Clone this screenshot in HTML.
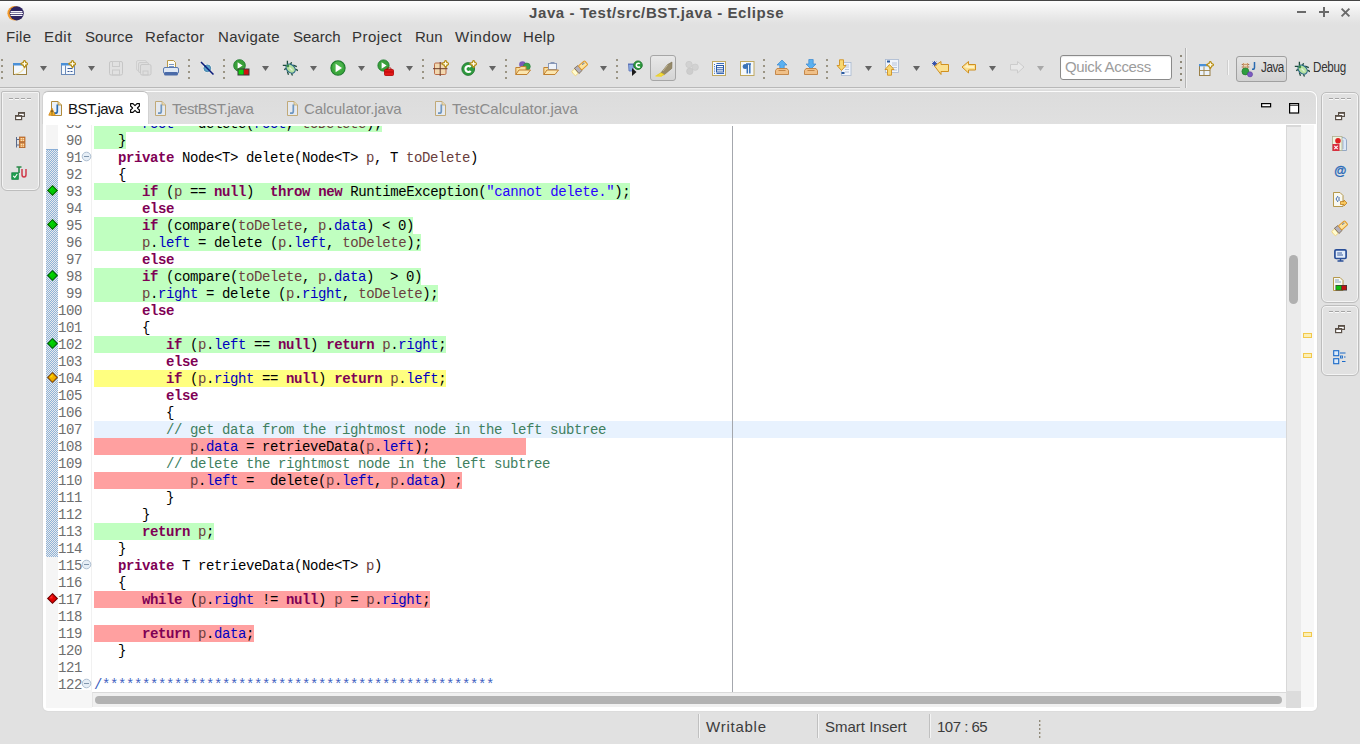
<!DOCTYPE html>
<html><head><meta charset="utf-8">
<style>
*{box-sizing:border-box;margin:0;padding:0}
html,body{width:1360px;height:744px;overflow:hidden;background:#e1e1e1;font-family:"Liberation Sans",sans-serif;position:relative}
.abs{position:absolute}
#title{left:0;top:0;width:1360px;height:26px;background:linear-gradient(#454545 0,#454545 1px,#fefefe 1px,#f6f6f6 6px,#ececec 14px,#e3e3e3 22px,#e1e1e1 26px)}
#title .t{left:529px;top:4px;white-space:nowrap;font-weight:bold;font-size:15px;color:#4e4e4e;letter-spacing:0.6px}
#menu{left:0;top:25px;width:1360px;height:24px}
#menu span{position:absolute;top:3px;font-size:15px;color:#333}
#tbsep{left:0;top:87px;width:1180px;height:1px;background:#b8b8b8}
#tbsep2{left:0;top:88px;width:1180px;height:1px;background:#ececec}
.dd{position:absolute;width:0;height:0;border-left:4px solid transparent;border-right:4px solid transparent;border-top:5px solid #6a6a6a;top:66px}
.vsep{position:absolute;top:58px;height:22px;width:1px;border-left:1px dotted #9a9a9a}
#editor{left:43px;top:91px;width:1274px;height:620px;background:#fff;border-radius:7px 7px 5px 5px;box-shadow:0 0 0 1px #dcdcdc}
#tabrow{left:0;top:0;width:1274px;height:33px;background:#dcdcdc}
.tab{position:absolute;font-size:15px;color:#8c8c8c;line-height:17px}
#code{left:44px;top:124px;width:1273px;height:584px;overflow:hidden}
.ln{position:absolute;left:13px;width:25px;text-align:right;font-family:"Liberation Mono",monospace;font-size:14px;letter-spacing:-0.4px;line-height:17px;height:17px;color:#6e6e6e}
.cl{position:absolute;height:17px;white-space:pre;font-family:"Liberation Mono",monospace;font-size:14px;letter-spacing:-0.4px;line-height:17px;color:#000}
.hl{position:absolute;height:17px}
.g{background:#c0ffc0}.r{background:#ffa0a0}.y{background:#ffff80}
.k{color:#7f0055;font-weight:bold}.f{color:#0000c0}.p{color:#6a3e3e}.s{color:#2a00ff}.c{color:#3f7f5f}.jd{color:#3f5fbf}
#status{left:0;top:712px;width:1360px;height:32px}
#status span{position:absolute;top:6px;font-size:15px;color:#3c3c3c}
.trim{position:absolute;background:#e1e1e1;border:1px solid #bdbdbd;border-radius:4px;box-shadow:inset 0 0 0 1px #f4f4f4}
</style></head>
<body>
<div id="title" class="abs">
  <svg class="abs" style="left:7px;top:4px" width="18" height="18" viewBox="0 0 18 18">
    <circle cx="7.7" cy="9.3" r="7.3" fill="#f39a2a"/>
    <circle cx="9.7" cy="9.3" r="7.1" fill="#2e2460"/>
    <rect x="3.5" y="6.9" width="12" height="1.3" rx="0.6" fill="#f4f2fa"/>
    <rect x="3" y="8.8" width="13" height="1.3" rx="0.6" fill="#fff"/>
    <rect x="3.5" y="10.7" width="12" height="1.3" rx="0.6" fill="#f4f2fa"/>
  </svg>
  <div class="abs t">Java - Test/src/BST.java - Eclipse</div>
  <div class="abs" style="left:1297px;top:11px;width:9px;height:2px;background:#6a6a6a"></div>
  <div class="abs" style="left:1319px;top:11px;width:10px;height:2px;background:#6a6a6a"></div>
  <div class="abs" style="left:1323px;top:7px;width:2px;height:10px;background:#6a6a6a"></div>
  <svg class="abs" style="left:1340px;top:7px" width="11" height="11" viewBox="0 0 11 11"><path d="M1.6 1.6L9.4 9.4M9.4 1.6L1.6 9.4" stroke="#6a6a6a" stroke-width="1.9"/></svg>
</div>
<div id="menu" class="abs">
  <span style="left:6px;letter-spacing:0.3px">File</span><span style="left:44px;letter-spacing:0.5px">Edit</span><span style="left:85px;letter-spacing:0.1px">Source</span><span style="left:145px;letter-spacing:0.35px">Refactor</span><span style="left:218px;letter-spacing:0.35px">Navigate</span><span style="left:293px">Search</span><span style="left:352px;letter-spacing:0.5px">Project</span><span style="left:415px">Run</span><span style="left:455px;letter-spacing:0.55px">Window</span><span style="left:523px;letter-spacing:0.3px">Help</span>
</div>
<div id="toolbar" class="abs" style="left:0;top:0;width:1360px;height:90px">
<div class="abs" style="left:1px;top:58px;width:2px;height:22px;background:repeating-linear-gradient(180deg,transparent 0 1px,#9a9484 1px 3px,transparent 3px 6px)"></div>
<svg class="abs" style="left:12px;top:60px" width="16" height="16" viewBox="0 0 16 16"><rect x="1.5" y="3.5" width="13" height="11" fill="#f4f8fc" stroke="#9a8040"/><rect x="1" y="3" width="14" height="2.5" fill="#4a90d8"/><path d="M3 14Q10 13 13 7" stroke="#f0e0a8" stroke-width="1.2" fill="none"/><path d="M12.5 0.19999999999999973Q13.4 2.9 16.1 3.8Q13.4 4.7 12.5 7.4Q11.6 4.7 8.9 3.8Q11.6 2.9 12.5 0.19999999999999973Z" fill="#f8e8a8" stroke="#b8901c" stroke-width="1.5" stroke-linejoin="round"/><path d="M12.5 1.5999999999999996V6.0M10.3 3.8H14.7" stroke="#fffef0" stroke-width="1"/></svg>
<svg class="abs" style="left:40px;top:65px" width="7" height="7" viewBox="0 0 7 7"><path d="M0 1H7L3.5 6Z" fill="#646464"/></svg>
<svg class="abs" style="left:60px;top:60px" width="16" height="16" viewBox="0 0 16 16"><rect x="1.5" y="3.5" width="13" height="11" fill="#f4f8fc" stroke="#6a8ab8"/><rect x="1" y="3" width="14" height="2.5" fill="#4a90d8"/><path d="M5.5 5.5V14.5" stroke="#6a8ab8"/><path d="M7.5 8.5H12.5M7.5 11.5H9.5M10.5 11.5H12.5" stroke="#3a5a98" stroke-width="1"/><path d="M12.5 0.19999999999999973Q13.4 2.9 16.1 3.8Q13.4 4.7 12.5 7.4Q11.6 4.7 8.9 3.8Q11.6 2.9 12.5 0.19999999999999973Z" fill="#f8e8a8" stroke="#b8901c" stroke-width="1.5" stroke-linejoin="round"/><path d="M12.5 1.5999999999999996V6.0M10.3 3.8H14.7" stroke="#fffef0" stroke-width="1"/></svg>
<svg class="abs" style="left:88px;top:65px" width="7" height="7" viewBox="0 0 7 7"><path d="M0 1H7L3.5 6Z" fill="#646464"/></svg>
<svg class="abs" style="left:108px;top:60px" width="16" height="16" viewBox="0 0 16 16"><rect x="1.5" y="1.5" width="13" height="13.5" rx="1.5" fill="none" stroke="#c6c6c6"/><rect x="4.5" y="1.5" width="7" height="5" fill="none" stroke="#cacaca"/><rect x="4.5" y="10" width="7" height="5" fill="none" stroke="#cacaca"/></svg>
<svg class="abs" style="left:136px;top:60px" width="16" height="16" viewBox="0 0 16 16"><rect x="0.5" y="0.5" width="10" height="10" rx="1.5" fill="none" stroke="#d0d0d0"/><rect x="2.5" y="2.5" width="10" height="10" rx="1.5" fill="#dedede" stroke="#cccccc"/><rect x="4.5" y="4.5" width="10.5" height="10.5" rx="1.5" fill="#dedede" stroke="#c8c8c8"/><rect x="7" y="11" width="5" height="4" fill="none" stroke="#cacaca"/></svg>
<svg class="abs" style="left:163px;top:60px" width="16" height="16" viewBox="0 0 16 16"><path d="M4.5 0.5H10.5L12.5 2.5V9.5H4.5Z" fill="#fdfdf5" stroke="#b89848"/><path d="M6 4.5H11M6 6.5H11" stroke="#6a8ac0" stroke-width="0.9"/><rect x="0.5" y="7.5" width="15" height="6" rx="1.5" fill="#dfe8f4" stroke="#5a7ab0"/><rect x="1" y="12" width="14" height="3.5" rx="1.5" fill="#4a6aa8"/></svg>
<div class="abs" style="left:188px;top:58px;width:2px;height:22px;background:repeating-linear-gradient(180deg,transparent 0 1px,#9a9484 1px 3px,transparent 3px 6px)"></div>
<svg class="abs" style="left:199px;top:60px" width="16" height="16" viewBox="0 0 16 16"><circle cx="8.3" cy="8.3" r="4.3" fill="#fff" opacity="0.8"/><circle cx="8.3" cy="8.3" r="3.4" fill="#5aa0c8" stroke="#3a7aa0" stroke-width="0.8"/><path d="M2 2L14.5 14.5" stroke="#0a1a7a" stroke-width="1.5"/></svg>
<div class="abs" style="left:223px;top:58px;width:2px;height:22px;background:repeating-linear-gradient(180deg,transparent 0 1px,#9a9484 1px 3px,transparent 3px 6px)"></div>
<svg class="abs" style="left:233px;top:59px" width="17" height="17" viewBox="0 0 17 17"><circle cx="6.5" cy="6.5" r="5.8" fill="#3aa03a" stroke="#1a7a2a" stroke-width="0.9"/><path d="M4.6 3.2L9.6 6.5L4.6 9.8Z" fill="#fff"/><rect x="4.5" y="9.5" width="12" height="7" fill="#3a3a3a"/><rect x="5.5" y="10.5" width="5" height="5" fill="#10d010"/><rect x="11" y="10.5" width="4.5" height="5" fill="#d01010"/></svg>
<svg class="abs" style="left:262px;top:65px" width="7" height="7" viewBox="0 0 7 7"><path d="M0 1H7L3.5 6Z" fill="#646464"/></svg>
<svg class="abs" style="left:282px;top:60px" width="16" height="16" viewBox="0 0 16 16"><path d="M5.4 0.8V4.2M9.6 2.2L8.3 4.6M0.8 5.4H4M2.2 9.6L4.6 8.3M5.3 11.4L6.5 14.8M9.4 13.2L10.5 15.6M11.2 5.2L14.8 6.6M13.3 9L16 10.6" stroke="#1e4a3a" stroke-width="1.3" fill="none"/><ellipse cx="8.6" cy="8.6" rx="5.2" ry="3.8" transform="rotate(42 8.6 8.6)" fill="#b4e0a0" stroke="#2a6a88" stroke-width="1.1"/><circle cx="5.8" cy="5.9" r="1.4" fill="#3a8a4a"/><path d="M7.5 7.5L10.5 10.5" stroke="#e0f4d8" stroke-width="1.2"/></svg>
<svg class="abs" style="left:310px;top:65px" width="7" height="7" viewBox="0 0 7 7"><path d="M0 1H7L3.5 6Z" fill="#646464"/></svg>
<svg class="abs" style="left:330px;top:60px" width="16" height="16" viewBox="0 0 16 16"><circle cx="8" cy="8" r="7.1" fill="#3aa83a" stroke="#1c7a2c" stroke-width="1.1"/><circle cx="8" cy="6.5" r="5" fill="#5cc05c" opacity="0.5"/><path d="M5.6 3.8L12 8L5.6 12.2Z" fill="#fff"/></svg>
<svg class="abs" style="left:358px;top:65px" width="7" height="7" viewBox="0 0 7 7"><path d="M0 1H7L3.5 6Z" fill="#646464"/></svg>
<svg class="abs" style="left:377px;top:59px" width="17" height="17" viewBox="0 0 17 17"><circle cx="6.5" cy="6.5" r="5.6" fill="#3aa03a" stroke="#1a7a2a" stroke-width="0.9"/><path d="M4.6 3.2L9.6 6.5L4.6 9.8Z" fill="#fff"/><rect x="7.5" y="10.5" width="9" height="6" rx="1" fill="#e01818" stroke="#b00000" stroke-width="0.8"/><path d="M10 10.5V9H14V10.5M8 13H16" stroke="#b00000" stroke-width="0.8" fill="none"/></svg>
<svg class="abs" style="left:406px;top:65px" width="7" height="7" viewBox="0 0 7 7"><path d="M0 1H7L3.5 6Z" fill="#646464"/></svg>
<div class="abs" style="left:422px;top:58px;width:2px;height:22px;background:repeating-linear-gradient(180deg,transparent 0 1px,#9a9484 1px 3px,transparent 3px 6px)"></div>
<svg class="abs" style="left:433px;top:60px" width="16" height="16" viewBox="0 0 16 16"><rect x="1.5" y="3" width="11.5" height="11.5" rx="1.2" fill="#f2d8b0" stroke="#b86a48"/><path d="M7.2 2V16M0 8.7H14.5" stroke="#6a3a28" stroke-width="1"/><path d="M12.6 0.19999999999999973Q13.5 2.9 16.2 3.8Q13.5 4.7 12.6 7.4Q11.7 4.7 9.0 3.8Q11.7 2.9 12.6 0.19999999999999973Z" fill="#f8e8a8" stroke="#b8901c" stroke-width="1.5" stroke-linejoin="round"/><path d="M12.6 1.5999999999999996V6.0M10.399999999999999 3.8H14.8" stroke="#fffef0" stroke-width="1"/></svg>
<svg class="abs" style="left:461px;top:60px" width="16" height="16" viewBox="0 0 16 16"><circle cx="7.2" cy="9" r="6.4" fill="#2e9a3e" stroke="#1c6e2a" stroke-width="0.8"/><path d="M9.7 7A3 3 0 1 0 9.7 11" stroke="#fff" stroke-width="2.2" fill="none"/><path d="M12.6 0.19999999999999973Q13.5 2.9 16.2 3.8Q13.5 4.7 12.6 7.4Q11.7 4.7 9.0 3.8Q11.7 2.9 12.6 0.19999999999999973Z" fill="#f8e8a8" stroke="#b8901c" stroke-width="1.5" stroke-linejoin="round"/><path d="M12.6 1.5999999999999996V6.0M10.399999999999999 3.8H14.8" stroke="#fffef0" stroke-width="1"/></svg>
<svg class="abs" style="left:489px;top:65px" width="7" height="7" viewBox="0 0 7 7"><path d="M0 1H7L3.5 6Z" fill="#646464"/></svg>
<div class="abs" style="left:505px;top:58px;width:2px;height:22px;background:repeating-linear-gradient(180deg,transparent 0 1px,#9a9484 1px 3px,transparent 3px 6px)"></div>
<svg class="abs" style="left:515px;top:60px" width="16" height="16" viewBox="0 0 16 16"><circle cx="7.5" cy="4.5" r="3.3" fill="#7a5ab8"/><circle cx="11.8" cy="6.5" r="3.5" fill="#3aa04a" stroke="#2a7a3a" stroke-width="0.6"/><path d="M0.8 7.5H5L6 6.5H11V14.5H0.8Z" fill="#f7dc9a" stroke="#c08030"/><path d="M0.8 14.5L4 10H15.5L12 14.5Z" fill="#fbe6b0" stroke="#c08030"/></svg>
<svg class="abs" style="left:543px;top:60px" width="16" height="16" viewBox="0 0 16 16"><path d="M0.8 7.5H5L6 6.5H11V14.5H0.8Z" fill="#f7dc9a" stroke="#c08030"/><rect x="5.5" y="3.5" width="8" height="6" fill="#f0f4fa" stroke="#8898b8"/><rect x="7.5" y="2" width="4" height="2" fill="#8898b8"/><path d="M0.8 14.5L4 10H15.5L12 14.5Z" fill="#fbe6b0" stroke="#c08030"/></svg>
<svg class="abs" style="left:570px;top:58px" width="20" height="20" viewBox="0 0 20 20"><g transform="rotate(-41 10 10)"><path d="M1.5 7.2H5.6V12.8H1.5Q0.8 10 1.5 7.2Z" fill="#fffbd0" stroke="#f2c850" stroke-width="0.6"/><path d="M5.6 6.5L10 6.8V13.2L5.6 13.5Z" fill="#b4b0bc" stroke="#7a6a50" stroke-width="0.8"/><rect x="10" y="7.4" width="8.2" height="5.2" rx="1" fill="#fbe2a0" stroke="#e09828" stroke-width="1"/><circle cx="14.6" cy="8.9" r="0.6" fill="#2a50a0"/><circle cx="16.1" cy="8.9" r="0.6" fill="#2a50a0"/></g></svg>
<svg class="abs" style="left:600px;top:65px" width="7" height="7" viewBox="0 0 7 7"><path d="M0 1H7L3.5 6Z" fill="#646464"/></svg>
<div class="abs" style="left:616px;top:58px;width:2px;height:22px;background:repeating-linear-gradient(180deg,transparent 0 1px,#9a9484 1px 3px,transparent 3px 6px)"></div>
<svg class="abs" style="left:627px;top:60px" width="16" height="16" viewBox="0 0 16 16"><path d="M1.5 4.5H6.5L6 11H2Z" fill="#88a8e0" stroke="#5a72b8" stroke-width="0.8"/><rect x="1" y="3.5" width="6" height="1.5" fill="#5a72b8"/><circle cx="11" cy="5.2" r="4.3" fill="#2e9a3e" stroke="#1a6e2a" stroke-width="0.8"/><path d="M12.8 3.8A2 2 0 1 0 12.8 6.6" stroke="#fff" stroke-width="1.6" fill="none"/><path d="M5 8V16L9.5 12Z" fill="#1a1a1a"/></svg>
<div class="abs" style="left:650px;top:55px;width:26px;height:26px;border:1px solid #a6a6a6;border-radius:3px;background:linear-gradient(#e8e8e8,#d4d4d4)"></div>
<svg class="abs" style="left:655px;top:61px" width="18" height="16" viewBox="0 0 18 16"><path d="M17 1L12.5 3.6L6 11.8L9.4 13.6L16.8 7.4Z" fill="#968a6a" stroke="#7a6e50" stroke-width="0.6"/><path d="M12.8 3.8L8 10" stroke="#c8bc9a" stroke-width="0.8"/><path d="M6 11.8L3 13.6L1.5 14.6L6 15L9.4 13.6Z" fill="#f4dc3a" stroke="#d8b810" stroke-width="0.6"/><path d="M0.5 15H7" stroke="#f4d830" stroke-width="1.2"/></svg>
<svg class="abs" style="left:684px;top:60px" width="16" height="16" viewBox="0 0 16 16"><circle cx="5" cy="4.5" r="3.2" fill="#d2d2d2" stroke="#c8c8c8" stroke-width="0.6"/><circle cx="11.2" cy="7.2" r="3.2" fill="#d2d2d2" stroke="#c8c8c8" stroke-width="0.6"/><circle cx="5.8" cy="11.3" r="3.2" fill="#cdcdcd" stroke="#c4c4c4" stroke-width="0.6"/></svg>
<svg class="abs" style="left:711px;top:60px" width="16" height="16" viewBox="0 0 16 16"><rect x="1.5" y="1.5" width="13" height="14" fill="#f4f8fc" stroke="#c0a860"/><path d="M3.5 4V14" stroke="#3a6ab8" stroke-width="1" stroke-dasharray="1 1.2"/><path d="M5.5 3.5H13M5.5 13.5H13" stroke="#3a6ab8"/><rect x="5.5" y="5.5" width="7" height="6.5" fill="#fff" stroke="#2a5aa8"/><path d="M6 7.7H12M6 9.8H12" stroke="#2a5aa8"/></svg>
<svg class="abs" style="left:739px;top:60px" width="16" height="16" viewBox="0 0 16 16"><rect x="1.5" y="1.5" width="13.5" height="14" fill="#f4f8fc" stroke="#c0a860"/><path d="M7 4H12M8.3 4V13.5M10.8 4V13.5" stroke="#3a72b8" stroke-width="1.5"/><circle cx="6.2" cy="6.5" r="2.5" fill="#3a72b8"/></svg>
<div class="abs" style="left:763px;top:58px;width:2px;height:22px;background:repeating-linear-gradient(180deg,transparent 0 1px,#9a9484 1px 3px,transparent 3px 6px)"></div>
<svg class="abs" style="left:774px;top:59px" width="16" height="17" viewBox="0 0 16 17"><path d="M8 1L13 6H10.2V10H5.8V6H3Z" fill="#5ab0f0" stroke="#3a88d0" stroke-width="0.7"/><path d="M1.5 11.5L3 9.5H13L14.5 11.5V15.5H1.5Z" fill="#f0c088" stroke="#c08040" stroke-width="0.9"/><path d="M4.5 11.5H11.5" stroke="#c08040" stroke-width="0.9"/></svg>
<svg class="abs" style="left:803px;top:59px" width="16" height="17" viewBox="0 0 16 17"><path d="M8 10L13 5H10.2V0.5H5.8V5H3Z" fill="#5ab0f0" stroke="#3a88d0" stroke-width="0.7"/><path d="M1.5 11.5L3 9.5H13L14.5 11.5V15.5H1.5Z" fill="#f0c088" stroke="#c08040" stroke-width="0.9"/><path d="M4.5 11.5H11.5" stroke="#c08040" stroke-width="0.9"/></svg>
<div class="abs" style="left:826px;top:58px;width:2px;height:22px;background:repeating-linear-gradient(180deg,transparent 0 1px,#9a9484 1px 3px,transparent 3px 6px)"></div>
<svg class="abs" style="left:836px;top:59px" width="16" height="17" viewBox="0 0 16 17"><rect x="5.5" y="3.5" width="9.5" height="13" fill="#f0f4fa" stroke="#a8b8d0" stroke-width="0.8"/><path d="M9 6H13M9 8H13M9 10.5H13M9 13H13" stroke="#a8b8d0" stroke-width="0.8"/><rect x="5.5" y="13" width="3" height="2" fill="#2a5aa0"/><path d="M3.5 0.8H7.5V6.5H10L5.5 11.5L1 6.5H3.5Z" fill="#f8d870" stroke="#d09020" stroke-width="0.9"/></svg>
<svg class="abs" style="left:865px;top:65px" width="7" height="7" viewBox="0 0 7 7"><path d="M0 1H7L3.5 6Z" fill="#646464"/></svg>
<svg class="abs" style="left:884px;top:59px" width="16" height="17" viewBox="0 0 16 17"><rect x="1.5" y="0.5" width="13" height="13" fill="#f0f4fa" stroke="#a8b8d0" stroke-width="0.8"/><path d="M8 4H13M8 6H13M8 8.5H13M8 11H13" stroke="#a8b8d0" stroke-width="0.8"/><rect x="3" y="1.5" width="3" height="2" fill="#2a5aa0"/><path d="M3.5 16.2H7.5V10.5H10L5.5 5.5L1 10.5H3.5Z" fill="#f8d870" stroke="#d09020" stroke-width="0.9"/></svg>
<svg class="abs" style="left:913px;top:65px" width="7" height="7" viewBox="0 0 7 7"><path d="M0 1H7L3.5 6Z" fill="#646464"/></svg>
<svg class="abs" style="left:932px;top:60px" width="18" height="16" viewBox="0 0 18 16"><path d="M1 5.5L7.5 1V4H15V11H7.5V14Z" fill="#fbe090" stroke="#d09020" stroke-width="1" stroke-linejoin="round" transform="translate(1.5 0.5)"/><path d="M2.5 1V6M0 3.5H5M0.7 1.7L4.3 5.3M4.3 1.7L0.7 5.3" stroke="#2a4aa8" stroke-width="0.9"/></svg>
<svg class="abs" style="left:961px;top:60px" width="16" height="16" viewBox="0 0 16 16"><path d="M1 7L7.5 1.5V4.5H14.5V10H7.5V13Z" fill="#fbe090" stroke="#d09020" stroke-width="1" stroke-linejoin="round"/><path d="M3 7L7 4V6H13V8H7" fill="#fff8d8" opacity="0.7"/></svg>
<svg class="abs" style="left:989px;top:65px" width="7" height="7" viewBox="0 0 7 7"><path d="M0 1H7L3.5 6Z" fill="#646464"/></svg>
<svg class="abs" style="left:1009px;top:60px" width="16" height="16" viewBox="0 0 16 16"><path d="M15 7L8.5 1.5V4.5H1.5V10H8.5V13Z" fill="#e8e8e8" stroke="#cccccc" stroke-width="1" stroke-linejoin="round"/></svg>
<svg class="abs" style="left:1037px;top:65px" width="7" height="7" viewBox="0 0 7 7"><path d="M0 1H7L3.5 6Z" fill="#a8a8a8"/></svg>
<div class="abs" style="left:1060px;top:55px;width:112px;height:25px;background:#fff;border:1px solid #8a8a8a;border-radius:3px;box-shadow:inset 0 1px 1px rgba(0,0,0,0.08)"></div>
<div class="abs" style="left:1065px;top:58px;font-size:15px;line-height:17px;color:#9c9c9c;letter-spacing:-0.35px">Quick Access</div>
<div class="abs" style="left:1180px;top:54px;width:2px;height:29px;background:repeating-linear-gradient(180deg,transparent 0 1px,#8f897a 1px 3px,transparent 3px 6px)"></div>
<div class="abs" style="left:1185px;top:48px;width:1px;height:40px;background:#b4b4b4"></div>
<div class="abs" style="left:1186px;top:48px;width:1px;height:40px;background:#f0f0f0"></div>
<svg class="abs" style="left:1198px;top:61px" width="16" height="16" viewBox="0 0 16 16"><rect x="1.5" y="3.5" width="10.5" height="11" fill="#eaf2fc" stroke="#9a8048"/><rect x="1" y="3" width="11.5" height="2.3" fill="#4a90d8"/><path d="M6 5.5V14.5M1.5 9.5H12" stroke="#9a8048" stroke-width="0.9"/><path d="M12.3 0.19999999999999973Q13.200000000000001 2.9 15.9 3.8Q13.200000000000001 4.7 12.3 7.4Q11.4 4.7 8.700000000000001 3.8Q11.4 2.9 12.3 0.19999999999999973Z" fill="#f8e8a8" stroke="#b8901c" stroke-width="1.5" stroke-linejoin="round"/><path d="M12.3 1.5999999999999996V6.0M10.100000000000001 3.8H14.5" stroke="#fffef0" stroke-width="1"/></svg>
<div class="abs" style="left:1228px;top:60px;width:1px;height:15px;background:#f6f6f6"></div>
<div class="abs" style="left:1227px;top:60px;width:1px;height:15px;background:#cfcfcf"></div>
<div class="abs" style="left:1236px;top:56px;width:51px;height:26px;border:1px solid #a0a0a0;border-radius:3px;background:linear-gradient(#e4e4e4,#d2d2d2)"></div>
<svg class="abs" style="left:1241px;top:61px" width="16" height="17" viewBox="0 0 16 17"><path d="M2.5 2V7.5M6.5 2V7.5M0.8 3.5H8.2M0.8 6H8.2" stroke="#8a4a2a" stroke-width="1"/><rect x="1.5" y="2" width="6" height="5.5" fill="#f4d0a0" opacity="0.6"/><circle cx="4.4" cy="10.4" r="3.5" fill="#2e9e3e" stroke="#1c6e28" stroke-width="0.6"/><circle cx="9" cy="13.3" r="2.6" fill="#7a5ac0" stroke="#5a3a98" stroke-width="0.5"/><path d="M13.5 1V6.5Q13.5 8.3 11.7 8.3H11" stroke="#2a6ab0" stroke-width="1.5" fill="none"/></svg>
<div class="abs" style="left:1261px;top:59px;font-size:14px;line-height:17px;color:#333;letter-spacing:-0.6px;transform:scaleX(0.84);transform-origin:0 0">Java</div>
<svg class="abs" style="left:1294px;top:61px" width="16" height="16" viewBox="0 0 16 16"><path d="M5.4 0.8V4.2M9.6 2.2L8.3 4.6M0.8 5.4H4M2.2 9.6L4.6 8.3M5.3 11.4L6.5 14.8M9.4 13.2L10.5 15.6M11.2 5.2L14.8 6.6M13.3 9L16 10.6" stroke="#1e4a3a" stroke-width="1.3" fill="none"/><ellipse cx="8.6" cy="8.6" rx="5.2" ry="3.8" transform="rotate(42 8.6 8.6)" fill="#b4e0a0" stroke="#2a6a88" stroke-width="1.1"/><circle cx="5.8" cy="5.9" r="1.4" fill="#3a8a4a"/><path d="M7.5 7.5L10.5 10.5" stroke="#e0f4d8" stroke-width="1.2"/></svg>
<div class="abs" style="left:1313px;top:59px;font-size:14px;line-height:17px;color:#333;letter-spacing:-0.3px;transform:scaleX(0.83);transform-origin:0 0">Debug</div>
</div>
<div id="tbsep" class="abs"></div><div id="tbsep2" class="abs"></div>

<!-- left trim -->
<div class="trim" style="left:1px;top:91px;width:39px;height:100px;border-radius:2px 2px 6px 6px"></div>
<div class="abs" style="left:9px;top:99px;width:22px;height:1px;background:repeating-linear-gradient(90deg,#fafafa 0 4px,transparent 4px 6px)"></div>
<div class="abs" style="left:9px;top:98px;width:22px;height:1px;background:repeating-linear-gradient(90deg,#a4a4a4 0 4px,transparent 4px 6px)"></div>
<svg class="abs" style="left:15px;top:112px" width="10" height="9" viewBox="0 0 10 9"><rect x="3.6" y="0.6" width="5.8" height="3.8" fill="#fff" stroke="#5a5048" stroke-width="1.2"/><rect x="0.6" y="3.6" width="6" height="4" fill="#fff" stroke="#5a5048" stroke-width="1.2"/><path d="M0.6 4.3H6.6M3.6 1.3H9.4" stroke="#5a5048" stroke-width="1"/></svg>
<svg class="abs" style="left:15px;top:136px" width="11" height="12" viewBox="0 0 11 12"><path d="M1.5 1V11.5M1.5 3.5H4.5M1.5 9H4.5" stroke="#5a6a8a" stroke-width="1"/><rect x="4.5" y="1" width="5.5" height="5" fill="#d8843a" stroke="#a85a20" stroke-width="0.7"/><rect x="4.5" y="6.7" width="5.5" height="5" fill="#d8843a" stroke="#a85a20" stroke-width="0.7"/><rect x="5.6" y="2" width="1.5" height="1.3" fill="#fbe0b0"/><rect x="7.6" y="2" width="1.5" height="1.3" fill="#fbe0b0"/><rect x="5.6" y="3.8" width="1.5" height="1.3" fill="#fbe0b0"/><rect x="7.6" y="3.8" width="1.5" height="1.3" fill="#fbe0b0"/><rect x="5.6" y="7.7" width="1.5" height="1.3" fill="#fbe0b0"/><rect x="7.6" y="7.7" width="1.5" height="1.3" fill="#fbe0b0"/><rect x="5.6" y="9.5" width="1.5" height="1.3" fill="#fbe0b0"/><rect x="7.6" y="9.5" width="1.5" height="1.3" fill="#fbe0b0"/></svg>
<svg class="abs" style="left:11px;top:166px" width="16" height="14" viewBox="0 0 16 14"><path d="M5.5 1H10.5M8 1V7" stroke="#2a8a4a" stroke-width="1.6"/><path d="M11 3V8.5Q11 11 13 11Q15 11 15 8.5V3" stroke="#d03a4a" stroke-width="1.5" fill="none"/><rect x="0.8" y="6.8" width="6.5" height="6.5" fill="#20a050" stroke="#108040" stroke-width="0.8"/><path d="M2.2 9.8L3.8 11.5L6.2 8" stroke="#fff" stroke-width="1.1" fill="none"/></svg>

<!-- editor frame -->
<div id="editor" class="abs"></div>
<div class="abs" style="left:141px;top:92px;width:1175px;height:32px;background:linear-gradient(#dcdcdc,#e0e0e0);border-radius:0 6px 0 0"></div>
<div class="abs" style="left:42px;top:91px;width:107px;height:33px;background:#fff;border-radius:6px 6px 0 0;border:1px solid #d2d2d2;border-top-color:#bebebe;border-bottom:0"></div>
<div class="abs" style="left:148px;top:91px;width:1162px;height:1px;background:#fbfbfb"></div>

<svg class="abs" style="left:48px;top:100px;opacity:1" width="16" height="16" viewBox="0 0 16 16">
<path d="M3.5 1.5H10L13.5 5V15.5H3.5Z" fill="#eaf1fa" stroke="#b08a3a" stroke-width="1"/>
<path d="M10 1.5V5H13.5" fill="#f0d890" stroke="#b08a3a" stroke-width="0.8"/>
<path d="M9.3 4.5V11.2Q9.3 13.2 7.3 13.2H6" fill="none" stroke="#2c6cb0" stroke-width="1.7"/>
<path d="M4 8.2L7.2 15.2H0.8Z" fill="#f5b82e" stroke="#d08010" stroke-width="0.8" stroke-linejoin="round"/><path d="M4 10.2V12.6M4 13.4V14.3" stroke="#222" stroke-width="1.1"/>
</svg>
<div class="abs tab" style="left:68px;top:100px;color:#141414;letter-spacing:-0.55px">BST.java</div>
<svg class="abs" style="left:129px;top:102px" width="12" height="12" viewBox="0 0 12 12"><path d="M1.6 1.6H4L6 3.6L8 1.6H10.4V4L8.4 6L10.4 8V10.4H8L6 8.4L4 10.4H1.6V8L3.6 6L1.6 4Z" fill="#fff" stroke="#000" stroke-width="1.1" stroke-linejoin="round"/></svg>
<svg class="abs" style="left:152px;top:100px;opacity:0.62" width="16" height="16" viewBox="0 0 16 16">
<path d="M3.5 1.5H10L13.5 5V15.5H3.5Z" fill="#eaf1fa" stroke="#b08a3a" stroke-width="1"/>
<path d="M10 1.5V5H13.5" fill="#f0d890" stroke="#b08a3a" stroke-width="0.8"/>
<path d="M9.3 4.5V11.2Q9.3 13.2 7.3 13.2H6" fill="none" stroke="#2c6cb0" stroke-width="1.7"/>

</svg>
<div class="abs tab" style="left:172px;top:100px;letter-spacing:-0.45px">TestBST.java</div>
<svg class="abs" style="left:284px;top:100px;opacity:0.62" width="16" height="16" viewBox="0 0 16 16">
<path d="M3.5 1.5H10L13.5 5V15.5H3.5Z" fill="#eaf1fa" stroke="#b08a3a" stroke-width="1"/>
<path d="M10 1.5V5H13.5" fill="#f0d890" stroke="#b08a3a" stroke-width="0.8"/>
<path d="M9.3 4.5V11.2Q9.3 13.2 7.3 13.2H6" fill="none" stroke="#2c6cb0" stroke-width="1.7"/>

</svg>
<div class="abs tab" style="left:304px;top:100px;letter-spacing:-0.05px">Calculator.java</div>
<svg class="abs" style="left:432px;top:100px;opacity:0.62" width="16" height="16" viewBox="0 0 16 16">
<path d="M3.5 1.5H10L13.5 5V15.5H3.5Z" fill="#eaf1fa" stroke="#b08a3a" stroke-width="1"/>
<path d="M10 1.5V5H13.5" fill="#f0d890" stroke="#b08a3a" stroke-width="0.8"/>
<path d="M9.3 4.5V11.2Q9.3 13.2 7.3 13.2H6" fill="none" stroke="#2c6cb0" stroke-width="1.7"/>

</svg>
<div class="abs tab" style="left:452px;top:100px;letter-spacing:0px">TestCalculator.java</div>
<svg class="abs" style="left:1260px;top:102px" width="12" height="6" viewBox="0 0 12 6"><rect x="1.6" y="1.6" width="9" height="3.2" fill="#fff" stroke="#000" stroke-width="1.2"/></svg>
<svg class="abs" style="left:1288px;top:102px" width="12" height="12" viewBox="0 0 12 12"><rect x="1.6" y="1.6" width="9" height="9.4" fill="#fff" stroke="#000" stroke-width="1.2"/><path d="M2 3.3H10.2" stroke="#000" stroke-width="0.8"/></svg>

<div id="code" class="abs">
  <div class="abs" style="left:2px;top:0;width:12px;height:583px;background:#f5f5f5"></div>
  <div class="abs" style="left:2px;top:25px;width:12px;height:408px;background:repeating-conic-gradient(#8cb2da 0 25%,#ebebeb 0 50%) 1px 0/2px 2px"></div>
  <div class="abs" style="left:2px;top:25px;width:12px;height:1px;background:#8aaed6"></div>
  <div class="abs" style="left:14px;top:0;width:33px;height:566px;background:#ffffff"></div>
  <div class="abs" style="left:2px;top:566px;width:46px;height:18px;background:#f6f6f6"></div>
  <div class="abs" style="left:47px;top:0;width:1px;height:566px;background:#f1f1f1"></div>
  <div class="abs" style="left:50px;top:297px;width:1192px;height:17px;background:#e8f2fe"></div>
  <div class="abs" style="left:688px;top:0;width:1px;height:569px;background:#a4a7ad"></div>
<div class="hl g" style="top:-9px;left:50px;width:288px"></div>
<div class="hl g" style="top:8px;left:50px;width:32px"></div>
<div class="hl g" style="top:59px;left:50px;width:536px"></div>
<div class="hl g" style="top:93px;left:50px;width:319px"></div>
<div class="hl g" style="top:110px;left:50px;width:327px"></div>
<div class="hl g" style="top:144px;left:50px;width:327px"></div>
<div class="hl g" style="top:161px;left:50px;width:344px"></div>
<div class="hl g" style="top:212px;left:50px;width:352px"></div>
<div class="hl y" style="top:246px;left:50px;width:352px"></div>
<div class="hl r" style="top:314px;left:50px;width:432px"></div>
<div class="hl r" style="top:348px;left:50px;width:368px"></div>
<div class="hl g" style="top:399px;left:50px;width:120px"></div>
<div class="hl r" style="top:467px;left:50px;width:336px"></div>
<div class="hl r" style="top:501px;left:50px;width:160px"></div>
<div class="ln" style="top:-8px">89</div>
<div class="cl" style="top:-8px;left:98px"><span class="f">root</span> = delete(<span class="f">root</span>, <span class="p">toDelete</span>);</div>
<div class="ln" style="top:9px">90</div>
<div class="cl" style="top:9px;left:74px">}</div>
<div class="ln" style="top:26px">91</div>
<div class="cl" style="top:26px;left:74px"><span class="k">private</span> Node&lt;T&gt; delete(Node&lt;T&gt; <span class="p">p</span>, T <span class="p">toDelete</span>)</div>
<div class="ln" style="top:43px">92</div>
<div class="cl" style="top:43px;left:74px">{</div>
<div class="ln" style="top:60px">93</div>
<div class="cl" style="top:60px;left:98px"><span class="k">if</span> (<span class="p">p</span> == <span class="k">null</span>)  <span class="k">throw</span> <span class="k">new</span> RuntimeException(<span class="s">"cannot delete."</span>);</div>
<div class="ln" style="top:77px">94</div>
<div class="cl" style="top:77px;left:98px"><span class="k">else</span></div>
<div class="ln" style="top:94px">95</div>
<div class="cl" style="top:94px;left:98px"><span class="k">if</span> (compare(<span class="p">toDelete</span>, <span class="p">p</span>.<span class="f">data</span>) &lt; 0)</div>
<div class="ln" style="top:111px">96</div>
<div class="cl" style="top:111px;left:98px"><span class="p">p</span>.<span class="f">left</span> = delete (<span class="p">p</span>.<span class="f">left</span>, <span class="p">toDelete</span>);</div>
<div class="ln" style="top:128px">97</div>
<div class="cl" style="top:128px;left:98px"><span class="k">else</span></div>
<div class="ln" style="top:145px">98</div>
<div class="cl" style="top:145px;left:98px"><span class="k">if</span> (compare(<span class="p">toDelete</span>, <span class="p">p</span>.<span class="f">data</span>)  &gt; 0)</div>
<div class="ln" style="top:162px">99</div>
<div class="cl" style="top:162px;left:98px"><span class="p">p</span>.<span class="f">right</span> = delete (<span class="p">p</span>.<span class="f">right</span>, <span class="p">toDelete</span>);</div>
<div class="ln" style="top:179px">100</div>
<div class="cl" style="top:179px;left:98px"><span class="k">else</span></div>
<div class="ln" style="top:196px">101</div>
<div class="cl" style="top:196px;left:98px">{</div>
<div class="ln" style="top:213px">102</div>
<div class="cl" style="top:213px;left:122px"><span class="k">if</span> (<span class="p">p</span>.<span class="f">left</span> == <span class="k">null</span>) <span class="k">return</span> <span class="p">p</span>.<span class="f">right</span>;</div>
<div class="ln" style="top:230px">103</div>
<div class="cl" style="top:230px;left:122px"><span class="k">else</span></div>
<div class="ln" style="top:247px">104</div>
<div class="cl" style="top:247px;left:122px"><span class="k">if</span> (<span class="p">p</span>.<span class="f">right</span> == <span class="k">null</span>) <span class="k">return</span> <span class="p">p</span>.<span class="f">left</span>;</div>
<div class="ln" style="top:264px">105</div>
<div class="cl" style="top:264px;left:122px"><span class="k">else</span></div>
<div class="ln" style="top:281px">106</div>
<div class="cl" style="top:281px;left:122px">{</div>
<div class="ln" style="top:298px">107</div>
<div class="cl" style="top:298px;left:122px"><span class="c">// get data from the rightmost node in the left subtree</span></div>
<div class="ln" style="top:315px">108</div>
<div class="cl" style="top:315px;left:146px"><span class="p">p</span>.<span class="f">data</span> = retrieveData(<span class="p">p</span>.<span class="f">left</span>);</div>
<div class="ln" style="top:332px">109</div>
<div class="cl" style="top:332px;left:122px"><span class="c">// delete the rightmost node in the left subtree</span></div>
<div class="ln" style="top:349px">110</div>
<div class="cl" style="top:349px;left:146px"><span class="p">p</span>.<span class="f">left</span> =  delete(<span class="p">p</span>.<span class="f">left</span>, <span class="p">p</span>.<span class="f">data</span>) ;</div>
<div class="ln" style="top:366px">111</div>
<div class="cl" style="top:366px;left:122px">}</div>
<div class="ln" style="top:383px">112</div>
<div class="cl" style="top:383px;left:98px">}</div>
<div class="ln" style="top:400px">113</div>
<div class="cl" style="top:400px;left:98px"><span class="k">return</span> <span class="p">p</span>;</div>
<div class="ln" style="top:417px">114</div>
<div class="cl" style="top:417px;left:74px">}</div>
<div class="ln" style="top:434px">115</div>
<div class="cl" style="top:434px;left:74px"><span class="k">private</span> T retrieveData(Node&lt;T&gt; <span class="p">p</span>)</div>
<div class="ln" style="top:451px">116</div>
<div class="cl" style="top:451px;left:74px">{</div>
<div class="ln" style="top:468px">117</div>
<div class="cl" style="top:468px;left:98px"><span class="k">while</span> (<span class="p">p</span>.<span class="f">right</span> != <span class="k">null</span>) <span class="p">p</span> = <span class="p">p</span>.<span class="f">right</span>;</div>
<div class="ln" style="top:485px">118</div>
<div class="cl" style="top:485px;left:50px"></div>
<div class="ln" style="top:502px">119</div>
<div class="cl" style="top:502px;left:98px"><span class="k">return</span> <span class="p">p</span>.<span class="f">data</span>;</div>
<div class="ln" style="top:519px">120</div>
<div class="cl" style="top:519px;left:74px">}</div>
<div class="ln" style="top:536px">121</div>
<div class="cl" style="top:536px;left:50px"></div>
<div class="ln" style="top:553px">122</div>
<div class="cl" style="top:553px;left:50px"><span class="jd">/*************************************************</span></div>
<svg class="abs" style="left:2px;top:60.0px" width="13" height="13" viewBox="0 0 13 13"><path d="M6.5 1.7L11.3 6.5L6.5 11.3L1.7 6.5Z" fill="#00c800" stroke="#006400" stroke-width="1.1"/><path d="M6.5 2.8L3.2 6.3L6.5 6.5Z" fill="#00e000" opacity="0.8"/></svg>
<svg class="abs" style="left:2px;top:94.0px" width="13" height="13" viewBox="0 0 13 13"><path d="M6.5 1.7L11.3 6.5L6.5 11.3L1.7 6.5Z" fill="#00c800" stroke="#006400" stroke-width="1.1"/><path d="M6.5 2.8L3.2 6.3L6.5 6.5Z" fill="#00e000" opacity="0.8"/></svg>
<svg class="abs" style="left:2px;top:145.0px" width="13" height="13" viewBox="0 0 13 13"><path d="M6.5 1.7L11.3 6.5L6.5 11.3L1.7 6.5Z" fill="#00c800" stroke="#006400" stroke-width="1.1"/><path d="M6.5 2.8L3.2 6.3L6.5 6.5Z" fill="#00e000" opacity="0.8"/></svg>
<svg class="abs" style="left:2px;top:213.0px" width="13" height="13" viewBox="0 0 13 13"><path d="M6.5 1.7L11.3 6.5L6.5 11.3L1.7 6.5Z" fill="#00c800" stroke="#006400" stroke-width="1.1"/><path d="M6.5 2.8L3.2 6.3L6.5 6.5Z" fill="#00e000" opacity="0.8"/></svg>
<svg class="abs" style="left:2px;top:247.0px" width="13" height="13" viewBox="0 0 13 13"><path d="M6.5 1.7L11.3 6.5L6.5 11.3L1.7 6.5Z" fill="#f0b000" stroke="#8a4a00" stroke-width="1.1"/><path d="M6.5 2.8L3.2 6.3L6.5 6.5Z" fill="#ffe000" opacity="0.8"/></svg>
<svg class="abs" style="left:2px;top:468.0px" width="13" height="13" viewBox="0 0 13 13"><path d="M6.5 1.7L11.3 6.5L6.5 11.3L1.7 6.5Z" fill="#e00000" stroke="#700000" stroke-width="1.1"/><path d="M6.5 2.8L3.2 6.3L6.5 6.5Z" fill="#ff3030" opacity="0.8"/></svg>
<svg class="abs" style="left:37px;top:26.7px" width="11" height="11" viewBox="0 0 11 11"><circle cx="5.5" cy="5.5" r="4.3" fill="#e6eef6" stroke="#a6b8cc" stroke-width="0.9"/><path d="M3 5.5H8" stroke="#8096ad" stroke-width="1"/></svg>
<svg class="abs" style="left:37px;top:434.7px" width="11" height="11" viewBox="0 0 11 11"><circle cx="5.5" cy="5.5" r="4.3" fill="#e6eef6" stroke="#a6b8cc" stroke-width="0.9"/><path d="M3 5.5H8" stroke="#8096ad" stroke-width="1"/></svg>
<svg class="abs" style="left:37px;top:553.7px" width="11" height="11" viewBox="0 0 11 11"><circle cx="5.5" cy="5.5" r="4.3" fill="#e6eef6" stroke="#a6b8cc" stroke-width="0.9"/><path d="M3 5.5H8" stroke="#8096ad" stroke-width="1"/></svg>
  <div class="abs" style="left:2px;top:0;width:1240px;height:1px;background:#fff"></div>
  <div class="abs" style="left:48px;top:1px;width:1194px;height:1px;background:#fff"></div>
  <!-- h scrollbar -->
  <div class="abs" style="left:48px;top:568px;width:1194px;height:15px;background:#f0f0f0;border-top:1px solid #dadada;border-left:1px solid #e4e4e4"></div>
  <div class="abs" style="left:51px;top:572px;width:1187px;height:8px;background:#b2b2b2;border-radius:4px"></div>
  <!-- v scrollbar / overview -->
  <div class="abs" style="left:1242px;top:1px;width:31px;height:582px;background:linear-gradient(90deg,#d8d8d8 0 1px,#ebebeb 1px 15px,#f7f7f7 15px 28px,#ffffff 28px)"></div>
  <div class="abs" style="left:1242px;top:1px;width:15px;height:2px;background:#d8d8d8"></div>
  <div class="abs" style="left:1245px;top:131px;width:9px;height:49px;background:#b0b0b0;border-radius:4.5px"></div>
  <div class="abs" style="left:1242px;top:567px;width:15px;height:17px;background:#dcdcdc"></div>
  <div class="abs" style="left:1259px;top:209px;width:9px;height:5px;background:#fcefb4;border:1px solid #f2c94c"></div>
  <div class="abs" style="left:1259px;top:229px;width:9px;height:5px;background:#fcefb4;border:1px solid #f2c94c"></div>
  <div class="abs" style="left:1259px;top:508px;width:9px;height:5px;background:#fcefb4;border:1px solid #f2c94c"></div>
</div>

<!-- right trims -->
<div class="trim" style="left:1321px;top:92px;width:38px;height:211px;border-radius:5px 5px 6px 6px"></div>
<div class="abs" style="left:1329px;top:99px;width:22px;height:1px;background:repeating-linear-gradient(90deg,#fafafa 0 4px,transparent 4px 6px)"></div>
<div class="abs" style="left:1329px;top:98px;width:22px;height:1px;background:repeating-linear-gradient(90deg,#a4a4a4 0 4px,transparent 4px 6px)"></div>
<div class="trim" style="left:1321px;top:305px;width:38px;height:71px;border-radius:5px 5px 6px 6px"></div>
<div class="abs" style="left:1329px;top:312px;width:22px;height:1px;background:repeating-linear-gradient(90deg,#fafafa 0 4px,transparent 4px 6px)"></div>
<div class="abs" style="left:1329px;top:311px;width:22px;height:1px;background:repeating-linear-gradient(90deg,#a4a4a4 0 4px,transparent 4px 6px)"></div>
<svg class="abs" style="left:1335px;top:112px" width="10" height="9" viewBox="0 0 10 9"><rect x="3.6" y="0.6" width="5.8" height="3.8" fill="#fff" stroke="#5a5048" stroke-width="1.2"/><rect x="0.6" y="3.6" width="6" height="4" fill="#fff" stroke="#5a5048" stroke-width="1.2"/><path d="M0.6 4.3H6.6M3.6 1.3H9.4" stroke="#5a5048" stroke-width="1"/></svg>
<svg class="abs" style="left:1332px;top:136px" width="16" height="16" viewBox="0 0 16 16"><path d="M10 1.5Q14.5 1.5 14.5 5V14.5H8" fill="#dde8f8" stroke="#8aa0c0" stroke-width="0.9"/><path d="M11 4V13" stroke="#8aa0c0" stroke-width="0.7"/><rect x="0.5" y="0.5" width="9.5" height="14" fill="#eef4e0" stroke="#b0b090" stroke-width="0.8"/><circle cx="6" cy="4.8" r="2.8" fill="#e02020"/><rect x="0.5" y="8" width="7" height="7" fill="#d83040"/><path d="M2.3 9.8L5.7 13.2M5.7 9.8L2.3 13.2" stroke="#fff" stroke-width="1.1"/></svg>
<div class="abs" style="left:1332px;top:163px;width:16px;text-align:center;font-family:'Liberation Sans',sans-serif;font-weight:bold;font-style:italic;font-size:12.5px;line-height:16px;color:#2a6ab8;-webkit-text-stroke:0.3px #2a6ab8">@</div>
<svg class="abs" style="left:1333px;top:192px" width="15" height="15" viewBox="0 0 15 15"><path d="M0.5 0.5H7L10 3.5V14.5H0.5Z" fill="#f8f8f0" stroke="#b0903a" stroke-width="0.9"/><path d="M5 4L3 7L5 10M5 6H7M5 8H7" stroke="#2a5aa8" stroke-width="0.9" fill="none"/><path d="M7.5 9.5H11V8L14 11L11 14V12.5H7.5Z" fill="#f8c860" stroke="#c08020" stroke-width="0.8"/></svg>
<svg class="abs" style="left:1330px;top:218px" width="20" height="20" viewBox="0 0 20 20"><g transform="rotate(-41 10 10)"><path d="M1.5 7.2H5.6V12.8H1.5Q0.8 10 1.5 7.2Z" fill="#fffbd0" stroke="#f2c850" stroke-width="0.6"/><path d="M5.6 6.5L10 6.8V13.2L5.6 13.5Z" fill="#b4b0bc" stroke="#7a6a50" stroke-width="0.8"/><rect x="10" y="7.4" width="8.2" height="5.2" rx="1" fill="#fbe2a0" stroke="#e09828" stroke-width="1"/><circle cx="14.6" cy="8.9" r="0.6" fill="#2a50a0"/><circle cx="16.1" cy="8.9" r="0.6" fill="#2a50a0"/></g></svg>
<svg class="abs" style="left:1334px;top:249px" width="13" height="13" viewBox="0 0 13 13"><rect x="0.9" y="0.9" width="11.2" height="8.6" rx="1.2" fill="#e4eefa" stroke="#2a4f98" stroke-width="1.7"/><path d="M3.2 4H8M3.2 6H9" stroke="#2a4f98" stroke-width="0.9"/><path d="M3.5 12H9.5M6.5 10V12" stroke="#2a4f98" stroke-width="1.4"/></svg>
<svg class="abs" style="left:1333px;top:277px" width="15" height="14" viewBox="0 0 15 14"><path d="M0.5 0.5H7L10 3.5V13.5H0.5Z" fill="#f8f8f0" stroke="#b0903a" stroke-width="0.9"/><path d="M2 3H6M2 5H8" stroke="#6a8ab0" stroke-width="0.8"/><rect x="2.5" y="8" width="11.5" height="5.5" fill="#3a3a3a"/><rect x="3.2" y="8.7" width="5" height="4.1" fill="#10c010"/><rect x="8.8" y="8.7" width="4.5" height="4.1" fill="#c01010"/></svg>
<svg class="abs" style="left:1335px;top:325px" width="10" height="9" viewBox="0 0 10 9"><rect x="3.6" y="0.6" width="5.8" height="3.8" fill="#fff" stroke="#5a5048" stroke-width="1.2"/><rect x="0.6" y="3.6" width="6" height="4" fill="#fff" stroke="#5a5048" stroke-width="1.2"/><path d="M0.6 4.3H6.6M3.6 1.3H9.4" stroke="#5a5048" stroke-width="1"/></svg>
<svg class="abs" style="left:1333px;top:350px" width="14" height="15" viewBox="0 0 14 15"><rect x="0.7" y="0.7" width="5" height="5" fill="#dcebfb" stroke="#1a6ac8" stroke-width="1.1"/><rect x="0.7" y="8.7" width="5" height="5" fill="#dcebfb" stroke="#1a6ac8" stroke-width="1.1"/><path d="M7 3H12.5M9 11.5H12.5M11 7H12.5" stroke="#1a6ac8" stroke-width="1.1"/><rect x="7.5" y="6" width="2" height="2" fill="none" stroke="#1a6ac8" stroke-width="0.9"/></svg>

<div id="status" class="abs">
  <div class="abs" style="left:698px;top:2px;width:1px;height:24px;background:#c0c0c0"></div><div class="abs" style="left:699px;top:2px;width:1px;height:24px;background:#f4f4f4"></div>
  <div class="abs" style="left:817px;top:2px;width:1px;height:24px;background:#c0c0c0"></div><div class="abs" style="left:818px;top:2px;width:1px;height:24px;background:#f4f4f4"></div>
  <div class="abs" style="left:929px;top:2px;width:1px;height:24px;background:#c0c0c0"></div><div class="abs" style="left:930px;top:2px;width:1px;height:24px;background:#f4f4f4"></div>
  <div class="abs" style="left:1039px;top:7px;width:1px;height:20px;background:repeating-linear-gradient(180deg,transparent 0 1px,#8f897a 1px 3px,transparent 3px 4px)"></div><div class="abs" style="left:1040px;top:7px;width:1px;height:20px;background:repeating-linear-gradient(180deg,transparent 0 1px,#c4c0b6 1px 3px,transparent 3px 4px)"></div>
  <span style="left:706px;letter-spacing:0.75px">Writable</span><span style="left:825px">Smart Insert</span><span style="left:937px;letter-spacing:-0.5px">107 : 65</span>
</div>
</body></html>
